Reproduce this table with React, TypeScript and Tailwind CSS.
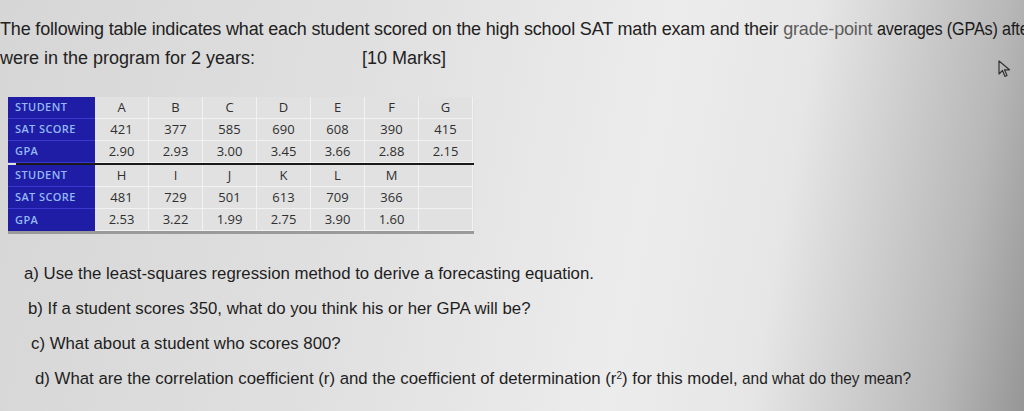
const top = [
  ["A", "B", "C", "D", "E", "F", "G"],
  ["421", "377", "585", "690", "608", "390", "415"],
  ["2.90", "2.93", "3.00", "3.45", "3.66", "2.88", "2.15"],
];
const bottom = [
  ["H", "I", "J", "K", "L", "M", ""],
  ["481", "729", "501", "613", "709", "366", ""],
  ["2.53", "3.22", "1.99", "2.75", "3.90", "1.60", ""],
];
const labels = ["STUDENT", "SAT SCORE", "GPA"];

function Block({rows, last}: {rows: string[][]; last?: boolean}) {
  return (
    <>
      {rows.map((row, i) => (
        <div key={i} className="flex h-[22px]">
          <div
            className={`w-[87px] shrink-0 bg-[#1f1ca6] text-[#93b9f3] font-semibold text-[11px] tracking-[0.4px] flex items-center pl-[7px] border-b border-[#3a3ad0] ${
              last && i === 2 ? "border-b-0" : ""
            }`}
          >
            {labels[i]}
          </div>
          {row.map((c, j) => (
            <div
              key={j}
              className="w-[54px] shrink-0 flex items-center justify-center text-[13px] text-[#303030] border-r border-b border-[#f2f2f2]"
            >
              {c}
            </div>
          ))}
        </div>
      ))}
    </>
  );
}

export default function App() {
  return (
    <div className="w-[1024px] h-[411px] overflow-hidden relative bg-[linear-gradient(100deg,#d6d6d6_0%,#e0e0e0_35%,#ececec_62%,#e6e6e6_75%,#b8b8b8_92%,#969696_100%)] font-['Liberation_Sans',sans-serif] text-[#222]">
      <div className="pt-[15px] text-[18px] leading-[29px] whitespace-nowrap">
        <p className="tracking-[-0.17px]">
          The following table indicates what each student scored on the high school SAT math exam and their{" "}
          <span className="text-[#5c5c5c]">grade-point</span>{" "}
          <span className="inline-block origin-left scale-x-[0.9] text-[#1a1a1a]">averages (GPAs) after</span>
        </p>
        <p className="flex">
          <span className="w-[362px]">were in the program for 2 years:</span>
          <span>[10 Marks]</span>
        </p>
      </div>

      <div className="ml-[8px] mt-[24px] w-[466px] bg-[#e1e1e1] font-['Open_Sans',sans-serif]">
        <Block rows={top} />
        <div className="h-[2px] bg-[#1a1a1a] ml-[8px]" />
        <Block rows={bottom} last />
        <div className="h-[3px] bg-[#9a9a9a]" />
      </div>

      <div className="mt-[30px] text-[16.8px] leading-[20px] flex flex-col gap-[15px] whitespace-nowrap text-[#1e1e1e]">
        <p className="pl-[24px]">a) Use the least-squares regression method to derive a forecasting equation.</p>
        <p className="pl-[28px]">b) If a student scores 350, what do you think his or her GPA will be?</p>
        <p className="pl-[31px]">c) What about a student who scores 800?</p>
        <p className="pl-[35px]">
          d) What are the correlation coefficient (r) and the coefficient of determination (r
          <sup className="text-[10px]">2</sup>) for this model,{" "}
          <span className="inline-block origin-left scale-x-[0.92]">and what do they mean?</span>
        </p>
      </div>

      <svg className="absolute left-[998px] top-[60px]" width="14" height="18" viewBox="0 0 14 18">
        <path d="M1 1 L1 14 L4.5 10.5 L7 16.5 L9 15.5 L6.5 9.8 L11.5 9.8 Z" fill="none" stroke="#333" strokeWidth="1.2" strokeLinejoin="round" />
      </svg>
    </div>
  );
}
